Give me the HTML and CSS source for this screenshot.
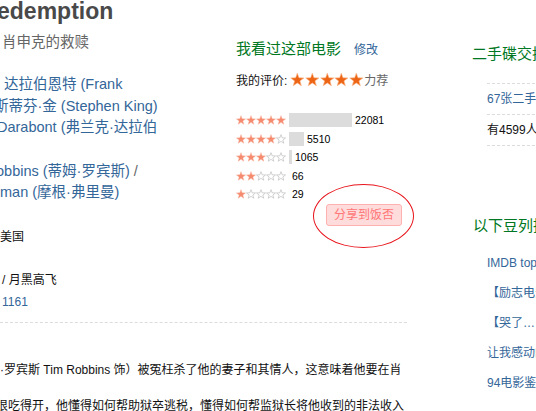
FILE: index.html
```html
<!DOCTYPE html>
<html lang="zh-CN">
<head>
<meta charset="utf-8">
<title>肖申克的救赎 The Shawshank Redemption</title>
<link rel="stylesheet" href="styles.css">
</head>
<body>
<svg class="defs" width="0" height="0" aria-hidden="true">
  <symbol id="star" viewBox="0 0 20 20">
    <polygon points="10,1.3 12.29,7.64 19.04,7.86 13.71,12 15.58,18.49 10,14.7 4.42,18.49 6.29,12 0.96,7.86 7.71,7.64"/>
  </symbol>
</svg>
<div class="page">
  <h1 class="title">edemption</h1>
  <div class="cols">
    <div class="article">
      <div class="subject">
        <div class="info">
          <div class="aka">肖申克的救赎</div>
          <div class="lines">
            <div class="line shift-r4"><a href="#">达拉伯恩特 (Frank</a></div>
            <div class="line shift-l6"><a href="#">斯蒂芬·金 (Stephen King)</a></div>
            <div class="line shift-l3"><a href="#">Darabont (弗兰克·达拉伯</a></div>
            <div class="line">&nbsp;</div>
            <div class="line shift-l4"><a href="#">obbins (蒂姆·罗宾斯)</a> <span class="sep">/</span></div>
            <div class="line"><a href="#">man (摩根·弗里曼)</a></div>
            <div class="line">&nbsp;</div>
            <div class="line"><span class="small">美国</span></div>
            <div class="line">&nbsp;</div>
            <div class="line shift-r2"><span class="small">/ 月黑高飞</span></div>
            <div class="line shift-r2"><a class="small" href="#">1161</a></div>
          </div>
        </div>
        <div class="rating">
          <div class="rate-head">
            <h2 class="green-h">我看过这部电影</h2>
            <a class="edit" href="#">修改</a>
          </div>
          <div class="my-rate">
            <span>我的评价:</span>
            <span class="bigstars">
              <svg class="bs"><use href="#star"/></svg><svg class="bs"><use href="#star"/></svg><svg class="bs"><use href="#star"/></svg><svg class="bs"><use href="#star"/></svg><svg class="bs"><use href="#star"/></svg>
            </span>
            <span class="verdict">力荐</span>
          </div>
          <div class="dist">
            <div class="row">
              <span class="stars"><svg class="ss on"><use href="#star"/></svg><svg class="ss on"><use href="#star"/></svg><svg class="ss on"><use href="#star"/></svg><svg class="ss on"><use href="#star"/></svg><svg class="ss on"><use href="#star"/></svg></span>
              <span class="bar" style="width:63px"></span><span class="num">22081</span>
            </div>
            <div class="row">
              <span class="stars"><svg class="ss on"><use href="#star"/></svg><svg class="ss on"><use href="#star"/></svg><svg class="ss on"><use href="#star"/></svg><svg class="ss on"><use href="#star"/></svg><svg class="ss"><use href="#star"/></svg></span>
              <span class="bar" style="width:15px"></span><span class="num">5510</span>
            </div>
            <div class="row">
              <span class="stars"><svg class="ss on"><use href="#star"/></svg><svg class="ss on"><use href="#star"/></svg><svg class="ss on"><use href="#star"/></svg><svg class="ss"><use href="#star"/></svg><svg class="ss"><use href="#star"/></svg></span>
              <span class="bar" style="width:3px"></span><span class="num">1065</span>
            </div>
            <div class="row">
              <span class="stars"><svg class="ss on"><use href="#star"/></svg><svg class="ss on"><use href="#star"/></svg><svg class="ss"><use href="#star"/></svg><svg class="ss"><use href="#star"/></svg><svg class="ss"><use href="#star"/></svg></span>
              <span class="bar" style="width:0px"></span><span class="num">66</span>
            </div>
            <div class="row">
              <span class="stars"><svg class="ss on"><use href="#star"/></svg><svg class="ss"><use href="#star"/></svg><svg class="ss"><use href="#star"/></svg><svg class="ss"><use href="#star"/></svg><svg class="ss"><use href="#star"/></svg></span>
              <span class="bar" style="width:0px"></span><span class="num">29</span>
            </div>
          </div>
          <div class="share-wrap">
            <a class="share" href="#">分享到饭否</a>
            <span class="ring" aria-hidden="true"></span>
          </div>
        </div>
      </div>
      <div class="rule"></div>
      <div class="intro">
        <p class="p1">·罗宾斯 Tim Robbins 饰）被冤枉杀了他的妻子和其情人，这意味着他要在肖</p>
        <p class="p2">很吃得开，他懂得如何帮助狱卒逃税，懂得如何帮监狱长将他收到的非法收入</p>
      </div>
    </div>
    <div class="aside">
      <h2 class="green-h side-h">二手碟交换</h2>
      <ul class="swap">
        <li><a href="#">67张二手DVD</a></li>
        <li>有4599人想要</li>
      </ul>
      <h2 class="green-h side-h2">以下豆列推荐</h2>
      <ul class="doulist">
        <li><a href="#">IMDB top 250</a></li>
        <li><a href="#">【励志电影】</a></li>
        <li><a href="#">【哭了…</a></li>
        <li><a href="#">让我感动的电影</a></li>
        <li><a href="#">94电影鉴赏</a></li>
      </ul>
    </div>
  </div>
</div>
</body>
</html>
```
FILE: styles.css
```css
* { box-sizing: border-box; }
html, body { margin: 0; padding: 0; background: #fff; }
body {
  width: 536px;
  height: 411px;
  overflow: hidden;
  font-family: "Liberation Sans", Arial, "Noto Sans CJK SC", sans-serif;
  font-size: 12px;
  color: #111;
}
a { color: #369; text-decoration: none; }
.defs { position: absolute; width: 0; height: 0; overflow: hidden; }
.page { width: 700px; }

.title {
  margin: 0 0 0 -3px;
  font-size: 23px;
  line-height: 23px;
  font-weight: bold;
  color: #494949;
  white-space: nowrap;
}

.cols { display: flex; align-items: flex-start; }
.article { width: 408px; flex: none; }
.subject { display: flex; align-items: flex-start; height: 299px; }

/* info column */
.info { width: 236px; flex: none; }
.aka {
  margin: 8px 0 0 2px;
  font-size: 14.5px;
  line-height: 22px;
  color: #666;
  white-space: nowrap;
}
.lines { margin-top: 21px; }
.line { height: 21.7px; line-height: 21.7px; font-size: 14.5px; white-space: nowrap; }
.small { font-size: 12px; color: #111; }
a.small { color: #369; }
.sep { color: #666; }
.shift-r4 { padding-left: 4px; }
.shift-r2 { padding-left: 2px; }
.shift-l6 { margin-left: -6px; }
.shift-l4 { margin-left: -4px; }
.shift-l3 { margin-left: -3px; }

/* rating column */
.rating { width: 172px; flex: none; padding-top: 15px; position: relative; }
.rate-head { display: flex; align-items: baseline; height: 22px; }
.green-h {
  margin: 0;
  font-size: 15px;
  line-height: 22px;
  font-weight: normal;
  color: #072;
  white-space: nowrap;
}
.edit { font-size: 12px; margin-left: 13px; }
.my-rate {
  margin-top: 9px;
  height: 20px;
  display: flex;
  align-items: center;
  font-size: 12px;
  white-space: nowrap;
}
.bigstars { display: flex; margin-left: 3px; }
.bs {
  width: 14.6px;
  height: 15px;
  fill: #ec6414;
  stroke: #fbb98c;
  stroke-width: 0.9;
}
.verdict { color: #666; margin-left: 1px; }

.dist { margin-top: 21.75px; }
.row { height: 18.5px; display: flex; align-items: center; }
.stars { display: flex; width: 50px; flex: none; }
.ss {
  width: 10px;
  height: 10px;
  fill: #fff;
  stroke: #b9b9b9;
  stroke-width: 1.3;
}
.ss.on { fill: #f58a6e; stroke: #f9b39f; stroke-width: 1; }
.bar { height: 14px; background: #dcdcdc; margin-left: 3px; flex: none; }
.num { margin-left: 3px; font-size: 10.5px; color: #000; }

.share-wrap { position: relative; margin-top: 1px; padding-left: 90px; height: 22px; }
.share {
  display: inline-block;
  height: 22px;
  line-height: 20px;
  padding: 0 7px;
  font-size: 12px;
  color: #f77;
  background: #ffdcdc;
  border: 1px solid #ffb0b0;
  border-radius: 3px;
  white-space: nowrap;
}
.ring {
  position: absolute;
  left: 77px;
  top: -20px;
  width: 101px;
  height: 64px;
  border: 1.2px solid #e8141b;
  border-radius: 50%;
}

/* intro */
.rule { margin-top: 0; border-top: 1px dashed #dcdcdc; width: 407px; }
.intro { margin-top: 29px; font-size: 12px; }
.intro p { margin: 0; height: 36px; line-height: 36px; white-space: nowrap; color: #111; }
.p2 { margin-left: -4px !important; }

/* aside */
.aside { margin-left: 64px; padding-top: 20px; width: 228px; flex: none; }
.side-h { white-space: nowrap; }
.swap, .doulist { list-style: none; margin: 0; padding: 0; }
.swap { margin: 18px 0 0 15px; border-top: 1px dashed #dcdcdc; }
.swap li {
  height: 31px;
  line-height: 30px;
  border-bottom: 1px dashed #dcdcdc;
  font-size: 12px;
  white-space: nowrap;
}
.side-h2 { margin-top: 69px; margin-left: 1px; }
.doulist { margin: 11px 0 0 15px; }
.doulist li { height: 30px; line-height: 30px; font-size: 12px; white-space: nowrap; }
```
